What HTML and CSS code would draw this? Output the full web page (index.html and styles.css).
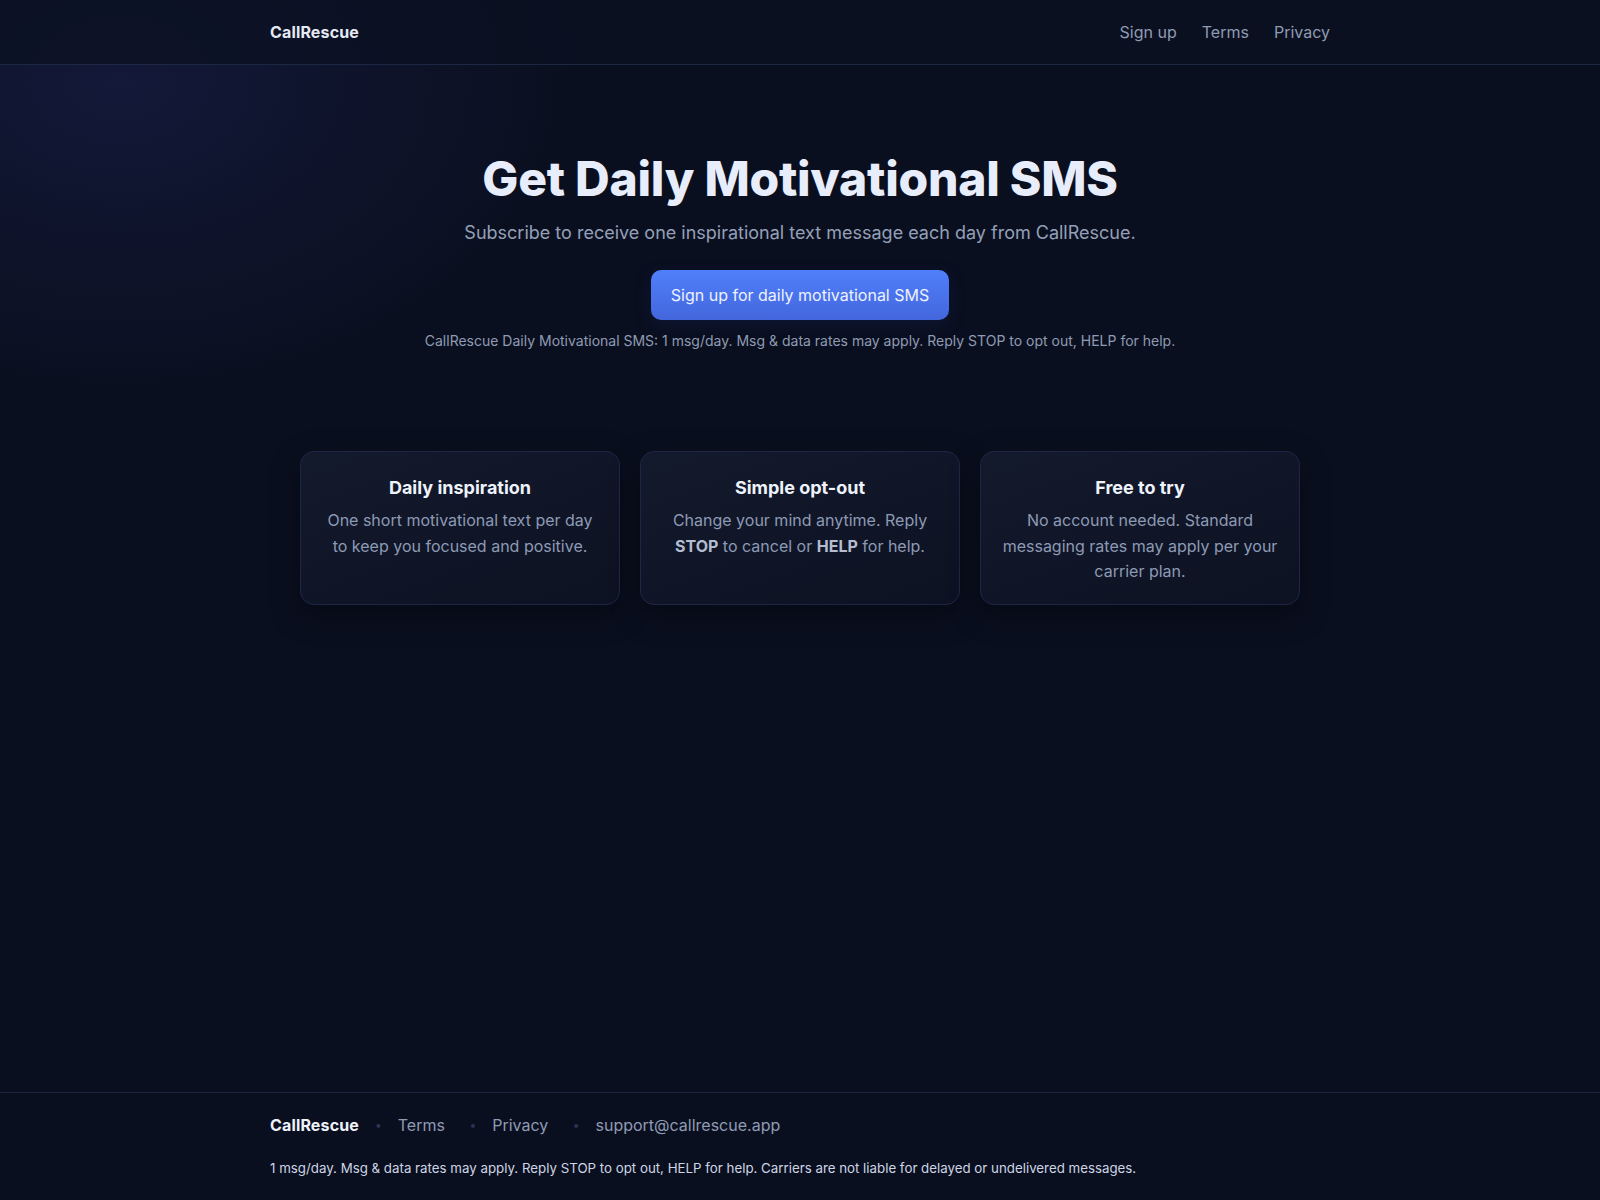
FILE: index.html
```html
<!DOCTYPE html>
<html lang="en">
<head>
<meta charset="utf-8">
<title>CallRescue — Daily Motivational SMS</title>
<link rel="stylesheet" href="styles.css">
</head>
<body>
<div class="page">
  <header class="site-header">
    <div class="container header-inner">
      <a class="brand" href="#">CallRescue</a>
      <nav class="nav">
        <a href="#">Sign up</a>
        <a href="#">Terms</a>
        <a href="#">Privacy</a>
      </nav>
    </div>
  </header>

  <main class="main">
    <section class="hero">
      <h1 class="hero-title">Get Daily Motivational SMS</h1>
      <p class="hero-sub">Subscribe to receive one inspirational text message each day from CallRescue.</p>
      <a class="btn" href="#">Sign up for daily motivational SMS</a>
      <p class="hero-note">CallRescue Daily Motivational SMS: 1 msg/day. Msg &amp; data rates may apply. Reply STOP to opt out, HELP for help.</p>
    </section>

    <section class="cards">
      <div class="card">
        <h3 class="card-title">Daily inspiration</h3>
        <p class="card-text">One short motivational text per day to keep you focused and positive.</p>
      </div>
      <div class="card">
        <h3 class="card-title">Simple opt-out</h3>
        <p class="card-text">Change your mind anytime. Reply <strong>STOP</strong> to cancel or <strong>HELP</strong> for help.</p>
      </div>
      <div class="card">
        <h3 class="card-title">Free to try</h3>
        <p class="card-text">No account needed. Standard messaging rates may apply per your carrier plan.</p>
      </div>
    </section>
  </main>

  <footer class="site-footer">
    <div class="container">
      <div class="footer-links">
        <span class="footer-brand">CallRescue</span>
        <span class="dot">•</span>
        <a href="#">Terms</a>
        <span class="dot">•</span>
        <a href="#">Privacy</a>
        <span class="dot">•</span>
        <a href="#">support@callrescue.app</a>
      </div>
      <p class="footer-note">1 msg/day. Msg &amp; data rates may apply. Reply STOP to opt out, HELP for help. Carriers are not liable for delayed or undelivered messages.</p>
    </div>
  </footer>
</div>
</body>
</html>
```

FILE: styles.css
```css
* { box-sizing: border-box; }

html, body {
  margin: 0;
  padding: 0;
}

body {
  font-family: Inter, "Noto Sans", "Liberation Sans", sans-serif;
  color: #e2e8f0;
  background-color: #0a0f1f;
  background-image: radial-gradient(ellipse 460px 320px at 120px 80px, rgba(38, 44, 110, 0.32), rgba(10, 15, 31, 0) 100%);
  background-repeat: no-repeat;
  min-height: 100vh;
}

a { text-decoration: none; color: inherit; }

.page {
  min-height: 100vh;
  display: flex;
  flex-direction: column;
}

.container {
  width: 1060px;
  margin: 0 auto;
}

.site-header {
  background: rgba(11, 16, 33, 0.72);
  border-bottom: 1px solid #1c2744;
}

.header-inner {
  height: 64px;
  display: flex;
  align-items: center;
  justify-content: space-between;
}

.brand {
  font-size: 16px;
  font-weight: 700;
  color: #e5e9f5;
  letter-spacing: 0.15px;
}

.nav {
  display: flex;
  gap: 25px;
}

.nav a {
  font-size: 16px;
  color: #8f9bb3;
}

.main {
  flex: 1;
}

.hero {
  display: flex;
  flex-direction: column;
  align-items: center;
  text-align: center;
  padding-top: 86px;
}

.hero-title {
  margin: 0;
  font-size: 48px;
  line-height: 56px;
  font-weight: 800;
  letter-spacing: -0.25px;
  color: #e8edfb;
}

.hero-sub {
  margin: 12px 0 0;
  font-size: 18px;
  line-height: 27px;
  color: #94a0b8;
}

.btn {
  margin-top: 24px;
  display: inline-block;
  padding: 14px 20px;
  font-size: 16px;
  line-height: 22px;
  color: #eef2ff;
  border-radius: 10px;
  background: linear-gradient(180deg, #4f80fb 0%, #4466dc 100%);
  box-shadow: 0 6px 18px rgba(30, 50, 140, 0.18);
}

.hero-note {
  margin: 11px 0 0;
  font-size: 14px;
  line-height: 20px;
  color: #8f9bb3;
}

.cards {
  width: 1000px;
  margin: 100px auto 0;
  display: grid;
  grid-template-columns: repeat(3, 1fr);
  gap: 20px;
}

.card {
  border: 1px solid #1d2745;
  border-radius: 14px;
  background: linear-gradient(160deg, #131a2c 0%, #0d1222 100%);
  box-shadow: 0 10px 30px rgba(0, 0, 0, 0.35);
  padding: 22px 18px 19px;
  text-align: center;
}

.card-title {
  margin: 0;
  font-size: 18px;
  line-height: 27px;
  font-weight: 700;
  color: #eef2fb;
}

.card-text {
  margin: 7px 0 0;
  font-size: 16px;
  line-height: 25.6px;
  color: #8d9ab5;
}

.card-text strong {
  font-weight: 700;
  color: #b4bdd0;
}

.site-footer {
  border-top: 1px solid #1a2440;
  padding: 20px 0 22px;
}

.footer-links {
  display: flex;
  align-items: center;
  gap: 16px;
  font-size: 16px;
  line-height: 24px;
}

.footer-brand {
  font-weight: 700;
  color: #eef2fb;
  letter-spacing: 0.15px;
}

.footer-links a {
  color: #8f9bb3;
  margin-right: 8.5px;
}

.footer-links a:last-child { margin-right: 0; }

.dot {
  color: #2a3552;
  font-size: 12px;
}

.footer-note {
  margin: 21px 0 0;
  font-size: 13.3px;
  line-height: 20px;
  color: #cdd5e4;
}
```
